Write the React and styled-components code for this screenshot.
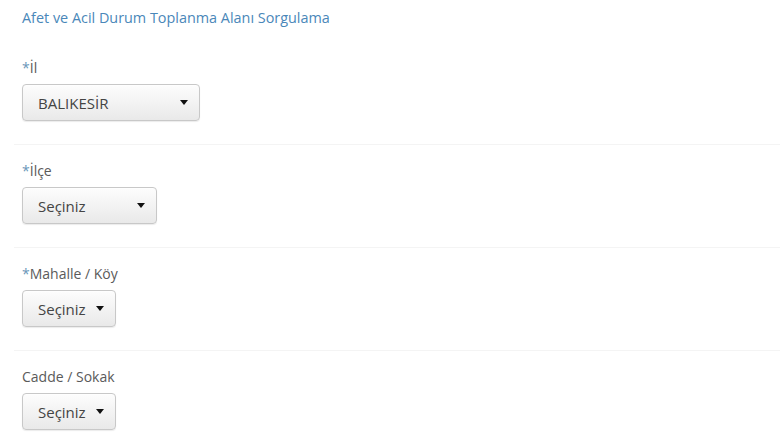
import styled, { createGlobalStyle } from 'styled-components'

const GlobalStyle = createGlobalStyle`
  body {
    margin: 0;
    background: #fff;
    font-family: "Open Sans", "Noto Sans", sans-serif;
  }
`

const Page = styled.div`
  width: 780px;
  height: 440px;
  overflow: hidden;
`

const Title = styled.h1`
  margin: 0;
  padding: 8px 0 15px 22px;
  font-size: 14.4px;
  line-height: 19px;
  font-weight: 400;
  color: #4a87b9;
`

const Row = styled.div`
  margin-left: 14px;
  padding: 16px 0 23px 8px;
  border-bottom: 1px solid ${p => (p.last ? 'transparent' : '#f4f4f4')};
`

const Label = styled.label`
  display: block;
  margin-bottom: 6px;
  font-size: 14px;
  line-height: 20px;
  color: #5a5a5a;
`

const Star = styled.span`
  color: #6a96b8;
`

const Select = styled.button`
  display: flex;
  align-items: center;
  justify-content: space-between;
  box-sizing: border-box;
  width: ${p => p.w}px;
  height: 37px;
  padding: 0 11px 0 15px;
  border: 1px solid #c8c8c8;
  border-radius: 4px;
  background: linear-gradient(to bottom, #fdfdfd 0%, #e9e9e9 100%);
  box-shadow: inset 0 1px 0 rgba(255, 255, 255, 0.5), 0 1px 1px rgba(0, 0, 0, 0.08);
  font-family: inherit;
  font-size: 15px;
  color: #444;
  cursor: pointer;
`

const Caret = styled.span`
  width: 0;
  height: 0;
  border-top: 5px solid #111;
  border-left: 4px solid transparent;
  border-right: 4px solid transparent;
`

const fields = [
  { label: 'İl', required: true, value: 'BALIKESİR', width: 178 },
  { label: 'İlçe', required: true, value: 'Seçiniz', width: 135 },
  { label: 'Mahalle / Köy', required: true, value: 'Seçiniz', width: 94 },
  { label: 'Cadde / Sokak', required: false, value: 'Seçiniz', width: 94 },
]

export default function App() {
  return (
    <Page>
      <GlobalStyle />
      <Title>Afet ve Acil Durum Toplanma Alanı Sorgulama</Title>
      {fields.map((f, i) => (
        <Row key={f.label} last={i === fields.length - 1}>
          <Label>
            {f.required && <Star>*</Star>}
            {f.label}
          </Label>
          <Select w={f.width}>
            <span>{f.value}</span>
            <Caret />
          </Select>
        </Row>
      ))}
    </Page>
  )
}
